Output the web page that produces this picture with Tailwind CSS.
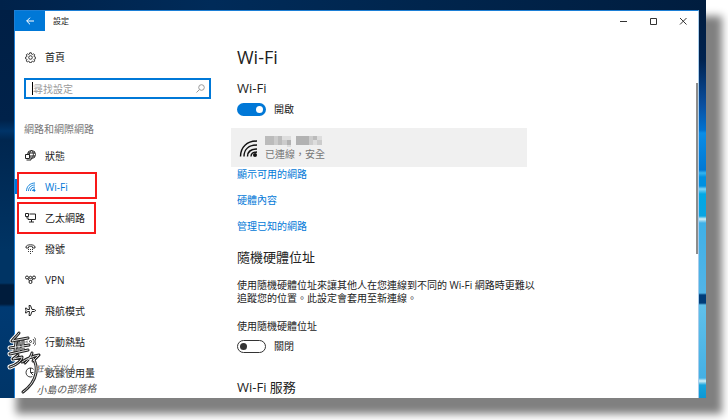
<!DOCTYPE html>
<html lang="zh-Hant">
<head>
  <meta charset="UTF-8" />
  <meta name="viewport" content="width=device-width, initial-scale=1" />
  <title>設定</title>
  <script src="https://cdn.jsdelivr.net/npm/@tailwindcss/browser@4"></script>
</head>
<body class="h-screen overflow-hidden bg-white pr-[22px] pb-[22px] font-['Open_Sans','Noto_Sans_CJK_TC',sans-serif] text-[10px] leading-[14px] text-[#222]">
  <!-- desktop -->
  <div class="flex h-full flex-col bg-[linear-gradient(90deg,#00224a,#002b59_30%,#00254d_60%,#001d3f)] shadow-[16px_16px_8px_0_#808080]">
    <div class="h-[10px] shrink-0"></div>
    <div class="flex min-h-0 flex-1">
      <div class="w-[14px] shrink-0 bg-[linear-gradient(180deg,#001f45_0,#00224a_110px,#003468_121px,#00264f_130px,#003464_240px,#003464_273px,#001c3c_275px,#001c3c_294px,#003a73_297px,#003568_100%)]"></div>

      <!-- settings window -->
      <div class="flex min-w-0 flex-1 flex-col overflow-hidden border-x border-t border-[#1c7fd6] border-r-[#a9cdec] bg-white">
        <header class="flex h-5 shrink-0 items-center">
          <button type="button" aria-label="返回" class="flex h-5 w-[30px] items-center justify-center bg-[#0078d7] text-white">
            <svg class="h-2 w-2" viewBox="0 0 8 8" fill="none" stroke="currentColor"><path d="M8 4H.7M4 .7.7 4 4 7.3" /></svg>
          </button>
          <h1 class="ml-2 flex-1 text-[8px]">設定</h1>
          <div class="flex text-[#333]">
            <button type="button" aria-label="最小化" class="flex h-5 w-[30px] items-center justify-center">
              <svg class="h-2 w-2" viewBox="0 0 8 8" fill="none" stroke="currentColor"><path d="M1 4.5h7" /></svg>
            </button>
            <button type="button" aria-label="最大化" class="flex h-5 w-[30px] items-center justify-center">
              <svg class="h-2 w-2" viewBox="0 0 8 8" fill="none" stroke="currentColor"><path d="M1.500 1.500h6v6h-6z" /></svg>
            </button>
            <button type="button" aria-label="關閉" class="flex h-5 w-[30px] items-center justify-center">
              <svg class="h-2 w-2" viewBox="0 0 8 8" fill="none" stroke="currentColor"><path d="M1 1l6.500 6.500M7.500 1 1 7.500" /></svg>
            </button>
          </div>
        </header>

        <div class="flex min-h-0 flex-1">
          <nav class="w-[198px] shrink-0 pt-4">
            <a href="#" class="flex h-5 items-center gap-[9px] pl-[10px]">
              <svg class="h-[11px] w-[11px]" viewBox="0 0 22 22" fill="none" stroke="currentColor" stroke-width="1.800"><circle cx="11" cy="11" r="3.600" /><path d="M9.500 1.500h3l.6 2.600 1.800.8 2.300-1.400 2.200 2.200-1.400 2.300.8 1.800 2.600.6v3l-2.600.6-.8 1.500 1.400 2.300-2.200 2.200-2.300-1.400-1.800.8-.6 2.100h-3l-.6-2.100-1.800-.8-2.300 1.400-2.200-2.200L4 15.500l-.8-1.500-2.200-.6v-3l2.200-.6L4 8 2.600 5.700l2.200-2.200 2.300 1.400 1.800-.8z" /></svg>
              首頁
            </a>
            <label class="mt-[11px] ml-[9px] flex h-[21px] w-[187px] items-center border-2 border-[#0078d7] pr-1 pl-1.5 text-[#999]">
              <span class="h-[13px] w-px bg-black"></span>
              <input type="text" aria-label="尋找設定" placeholder="尋找設定" class="min-w-0 flex-1 outline-none placeholder:text-[#999]" />
              <svg class="h-[9px] w-[9px]" viewBox="0 0 9 9" fill="none" stroke="currentColor"><circle cx="5.500" cy="3.500" r="2.800" /><path d="M3.500 5.500.5 8.500" /></svg>
            </label>
            <h2 class="mt-[23px] pl-[9px] text-[#777]">網路和網際網路</h2>
            <ul class="mt-1">
              <li>
                <a href="#" class="flex h-[31px] items-center gap-[9px] pl-[10px]">
                  <svg class="h-[11px] w-[11px]" viewBox="0 0 22 22" fill="none" stroke="currentColor" stroke-width="2"><circle cx="13" cy="9" r="8" /><path d="M13 1c-5 5-5 9-3 13M13 1c5 5 5 11 0 16M6 6h14M10 12h10" /><path d="M1 9h8v8H1zM3 20h9v-6" fill="#fff" /></svg>
                  狀態
                </a>
              </li>
              <li class="relative">
                <a href="#" class="flex h-[31px] items-center gap-[9px] pl-[10px] text-[#0078d7]">
                  <svg class="h-[11px] w-[11px]" viewBox="0 0 22 22" fill="none" stroke="currentColor" stroke-width="1.800"><path d="M3 20C3 11 10 4 20 4M7 20c0-7 5-12 13-12M11 20c0-5 3-8 9-8M15 20c0-3 2-4 5-4" /><circle cx="18.500" cy="19" r="1.500" fill="currentColor" /></svg>
                  Wi-Fi
                </a>
                <span class="absolute top-2 left-0 h-[15px] w-0.5 bg-[#0078d7]"></span>
                <span class="absolute top-px left-0.5 h-[27px] w-20 border-2 border-[#f81818]"></span>
              </li>
              <li class="relative">
                <a href="#" class="flex h-[31px] items-center gap-[9px] pl-[10px]">
                  <svg class="h-[11px] w-[11px]" viewBox="0 0 22 22" fill="none" stroke="currentColor" stroke-width="2"><path d="M9 4h12v11H6v-4M13 15v5M8 20h10M1 3h6v6H1zM4 9v4" /></svg>
                  乙太網路
                </a>
                <span class="absolute top-0 left-0.5 h-8 w-[79px] border-2 border-[#f81818]"></span>
              </li>
              <li>
                <a href="#" class="flex h-[31px] items-center gap-[9px] pl-[10px]">
                  <svg class="h-[11px] w-[11px]" viewBox="0 0 22 22" fill="none" stroke="currentColor" stroke-width="1.800"><path d="M2 8c0-6 18-6 18 0v2h-5V7.500c-2-1-6-1-8 0V10H2z" /><path d="M6 13h2m2 0h2m2 0h2M6 17h2m2 0h2m2 0h2M10 21h2" /></svg>
                  撥號
                </a>
              </li>
              <li>
                <a href="#" class="flex h-[31px] items-center gap-[9px] pl-[10px]">
                  <svg class="h-[11px] w-[11px]" viewBox="0 0 22 22" fill="none" stroke="currentColor" stroke-width="2"><circle cx="4" cy="7" r="3" /><circle cx="11" cy="7" r="2.500" /><circle cx="18" cy="7" r="3" /><circle cx="11" cy="16" r="3" /><path d="M6 9l3 5M16 9l-3 5" /></svg>
                  VPN
                </a>
              </li>
              <li>
                <a href="#" class="flex h-[31px] items-center gap-[9px] pl-[10px]">
                  <svg class="h-[11px] w-[11px]" viewBox="0 0 22 22" fill="none" stroke="currentColor" stroke-width="2"><path d="M21 11c0-1.500-2-2-3-2h-4L11 1H8l1 8H5L3 6H1l1 5-1 5h2l2-3h4l-1 8h3l3-8h4c1 0 3-.5 3-2z" /></svg>
                  飛航模式
                </a>
              </li>
              <li>
                <a href="#" class="flex h-[31px] items-center gap-[9px] pl-[10px]">
                  <svg class="h-[11px] w-[11px]" viewBox="0 0 22 22" fill="none" stroke="currentColor" stroke-width="1.800"><circle cx="11" cy="11" r="2" /><path d="M6 6c-3 3-3 7 0 10M16 6c3 3 3 7 0 10M3 3c-4 5-4 11 0 16M19 3c4 5 4 11 0 16" /></svg>
                  行動熱點
                </a>
              </li>
              <li>
                <a href="#" class="flex h-[31px] items-center gap-[9px] pl-[10px]">
                  <svg class="h-[11px] w-[11px]" viewBox="0 0 22 22" fill="none" stroke="currentColor" stroke-width="1.800"><circle cx="11" cy="11" r="9" /><path d="M11 2v9h9M11 11l6 6" /></svg>
                  數據使用量
                </a>
              </li>
            </ul>
          </nav>

          <main class="min-w-0 flex-1 overflow-hidden pt-3.5 pl-6">
            <div class="w-[290px]">
              <h2 class="text-lg leading-6">Wi-Fi</h2>
              <h3 class="mt-[9px] text-[13px] leading-5">Wi-Fi</h3>
              <label class="mt-1 flex h-3.5 items-center gap-2">
                <input type="checkbox" role="switch" checked class="flex h-[13px] w-[29px] appearance-none items-center justify-end rounded-full bg-[#0078d7] px-[3px] before:h-[7px] before:w-[7px] before:rounded-full before:bg-white" />
                開啟
              </label>
              <div class="mt-3 -ml-1.5 flex h-[39px] items-center gap-1.5 bg-[#f0f0f0] pl-2">
                <svg class="h-5 w-5" viewBox="0 0 20 20" fill="none" stroke="#111" stroke-width="1.400"><path d="M1.500 18.500C1.500 9 8 3 18 3M5 18.500C5 11 10 7 18 7M8.500 18.500c0-5 4-7.500 9.500-7.500M12 18.500c0-3 2-4.500 6-4.500" /><circle cx="16" cy="17" r="2" fill="#111" stroke="none" /></svg>
                <div>
                  <svg class="h-3 w-[58px]" viewBox="0 0 58 12" shape-rendering="crispEdges"><path fill="#bbb" d="M0 1h9v9H0zM13 1h4v9h-4zM48 1h4v4h-4z" /><path fill="#ccc" d="M9 1h4v9H9zM17 5h9v5h-9zM44 1h4v9h-4zM52 5h5v5h-5z" /><path fill="#b2b2b2" d="M22 5h4v5h-4zM31 1h13v9H31z" /><path fill="#ddd" d="M17 1h9v4h-9zM48 5h4v5h-4zM52 1h5v4h-5zM22 10h4v2h-4z" /></svg>
                  <p class="text-[#777]">已連線，安全</p>
                </div>
              </div>
              <div class="flex flex-col items-start gap-3 text-[#0078d7]">
                <a href="#">顯示可用的網路</a>
                <a href="#">硬體內容</a>
                <a href="#">管理已知的網路</a>
              </div>
              <h3 class="mt-3.5 text-[13px] leading-5">隨機硬體位址</h3>
              <p class="mt-3 -mr-3 leading-[13px]">使用隨機硬體位址來讓其他人在您連線到不同的 Wi-Fi 網路時更難以追蹤您的位置。此設定會套用至新連線。</p>
              <label for="random-address" class="mt-3.5 block">使用隨機硬體位址</label>
              <div class="mt-1.5 flex h-3.5 items-center gap-2">
                <input id="random-address" type="checkbox" role="switch" class="flex h-[13px] w-[29px] appearance-none items-center rounded-full border border-[#333] px-[2px] before:h-[7px] before:w-[7px] before:rounded-full before:bg-[#333]" />
                <span>關閉</span>
              </div>
              <h3 class="mt-6 text-[13px] leading-5">Wi-Fi 服務</h3>
            </div>
          </main>
          <div class="mt-[52px] h-[171px] w-0.5 bg-[#8c8c8c]"></div>
        </div>
      </div>

      <div class="w-[7px] shrink-0 bg-[linear-gradient(180deg,#001c3f_0,#002350_50px,#0a4fa0_95px,#0072d0_120px,#0a8de6_123px,#0078d4_160px,#35b5ef_163px,#0090e0_167px,#0090e0_176px,#7fd3f5_179px,#00a8e4_184px,#0aa5e2_206px,#d5eff5_209px,#40b0e6_213px,#52b4e6_283px,#003c78_285px,#003c78_293px,#60c0ea_295px,#45b0e4_368px,#d5eff5_371px,#18a4dc_375px,#0c98d6_100%)]"></div>
    </div>
  </div>

  <!-- signature over the lower left corner -->
  <div class="pointer-events-none absolute bottom-6 left-2 flex items-end">
    <svg class="h-[66px] w-8 overflow-visible" viewBox="0 0 32 66" fill="none" stroke-linecap="round" stroke-linejoin="round">
      <defs>
        <path id="mark" d="M11 3C9 6 6 8 4 11l5-1 11-2M2 18l19-3M8 12l-1 9M11 12v9M15 11v9M2 24l18-4M10 25l-5 4 9-2c0 3-5 8-12 10M14 32c4-3 11-6 17-7l-6 6M24 23c-1 4-4 7-7 10M25 28c5 8 6 22-10 34" />
      </defs>
      <use href="#mark" stroke="#fff" stroke-width="5" />
      <use href="#mark" stroke="#222" stroke-width="3" />
      <use href="#mark" stroke="#ddd" stroke-width="1" />
    </svg>
    <div class="-ml-1 -rotate-2 text-[#555] italic text-shadow-[0_0_2px_#fff]">
      <p class="text-[8px] leading-3">狂心方以人</p>
      <p class="mt-2 text-[10px] leading-[14px]">小島の部落格</p>
    </div>
  </div>
</body>
</html>
